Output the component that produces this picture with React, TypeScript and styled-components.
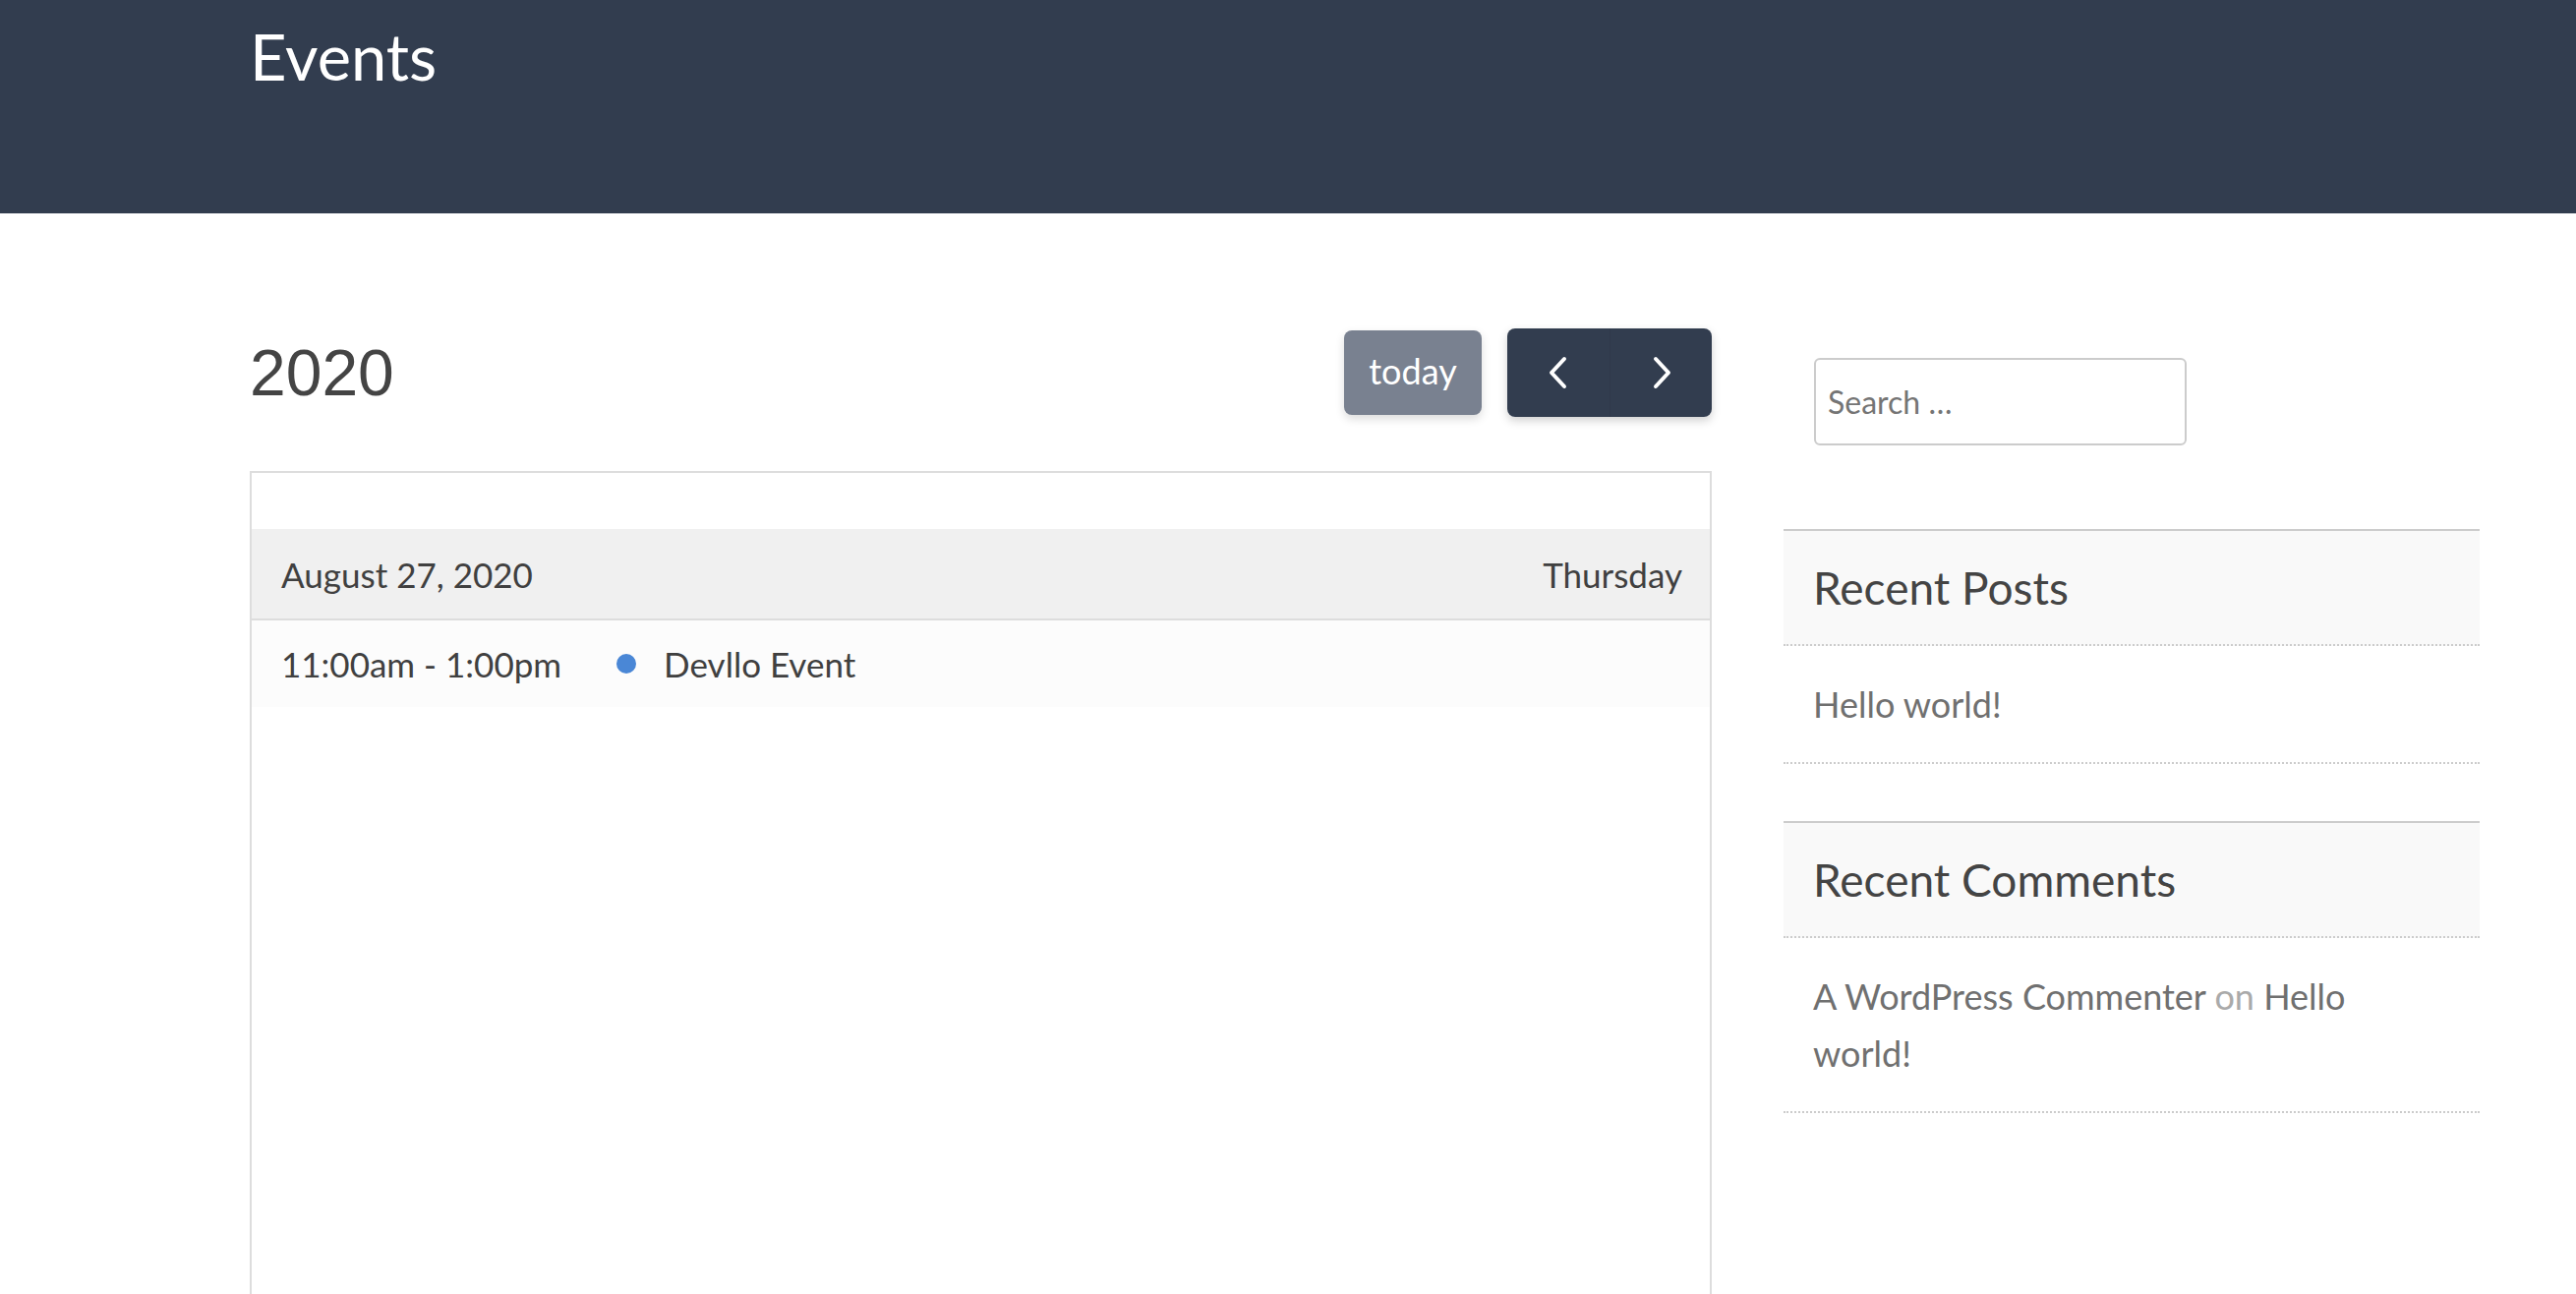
import React from "react";
import styled, { createGlobalStyle } from "styled-components";

const GlobalStyle = createGlobalStyle`
  html, body { margin: 0; padding: 0; background: #ffffff; }
  body { font-family: Lato, "Open Sans", sans-serif; color: #404040; }
  * { box-sizing: border-box; }
`;

const SiteHeader = styled.header`
  background: #323d4f;
  height: 217px;
  padding: 18px 0 0 254px;
`;

const SiteTitle = styled.h1`
  margin: 0;
  font-family: Lato, sans-serif;
  font-weight: 400;
  font-size: 65px;
  line-height: 1.2;
  color: #ffffff;
`;

const Page = styled.div`
  display: flex;
  align-items: flex-start;
  gap: 73px;
  padding: 117px 0 0 254px;
`;

const Main = styled.main`
  width: 1487px;
  flex: none;
`;

const Toolbar = styled.div`
  display: flex;
  align-items: center;
  justify-content: space-between;
  height: 90px;
  margin-bottom: 55px;
`;

const YearTitle = styled.h2`
  margin: 0;
  font-family: "Liberation Sans", Arial, sans-serif;
  font-weight: 400;
  font-size: 66px;
  color: #444444;
  line-height: 1;
`;

const Buttons = styled.div`
  display: flex;
  align-items: center;
  gap: 26px;
`;

const TodayButton = styled.button`
  width: 140px;
  height: 86px;
  border: none;
  border-radius: 8px;
  background: #798190;
  color: #ffffff;
  font-family: Lato, sans-serif;
  font-size: 36px;
  padding: 0 0 4px;
  box-shadow: 0 4px 10px rgba(0, 0, 0, 0.14);
`;

const NavGroup = styled.div`
  display: flex;
  border-radius: 8px;
  overflow: hidden;
  box-shadow: 0 4px 10px rgba(0, 0, 0, 0.18);
`;

const NavButton = styled.button<{ $first?: boolean }>`
  width: 104px;
  height: 90px;
  border: none;
  background: #323d4f;
  display: flex;
  align-items: center;
  justify-content: center;
  padding: 0;
  border-left: ${(p) => (p.$first ? "none" : "1px solid rgba(0,0,0,0.06)")};
`;

const ListBox = styled.div`
  border: 2px solid #dddddd;
  height: 1000px;
  padding-top: 57px;
`;

const DayHeader = styled.div`
  display: flex;
  align-items: center;
  justify-content: space-between;
  height: 93px;
  padding: 0 28px 0 30px;
  background: #f0f0f0;
  border-bottom: 2px solid #dddddd;
  font-size: 35px;
  color: #404040;
`;

const EventRow = styled.div`
  display: flex;
  align-items: center;
  height: 88px;
  background: #fcfcfc;
  font-size: 35px;
  color: #404040;
`;

const EventTime = styled.span`
  padding: 0 28px 0 30px;
`;

const EventDot = styled.span<{ $color: string }>`
  width: 20px;
  height: 20px;
  border-radius: 50%;
  background: ${(p) => p.$color};
  margin: 0 28px 0 28px;
  flex: none;
`;

const Sidebar = styled.aside`
  width: 708px;
  flex: none;
  display: flex;
  flex-direction: column;
  gap: 58px;
`;

const SearchWidget = styled.div`
  padding: 30px 31px 27px;
`;

const SearchInput = styled.input`
  width: 379px;
  height: 89px;
  border: 2px solid #cccccc;
  border-radius: 6px;
  padding: 0 12px;
  font-family: Lato, sans-serif;
  font-size: 32px;
  color: #444;
  outline: none;
  &::placeholder { color: #757575; }
`;

const Widget = styled.section`
  border-top: 2px solid #cccccc;
`;

const WidgetTitle = styled.h2`
  margin: 0;
  background: #f9f9f9;
  padding: 30px 30px;
  font-family: Lato, sans-serif;
  font-weight: 400;
  font-size: 46px;
  line-height: 55px;
  color: #444444;
  border-bottom: 2px dotted #cccccc;
`;

const WidgetList = styled.ul`
  list-style: none;
  margin: 0;
  padding: 0;
`;

const WidgetItem = styled.li`
  padding: 30px 30px;
  font-size: 36px;
  line-height: 58px;
  color: #aaaaaa;
  border-bottom: 2px dotted #cccccc;
`;

const WidgetLink = styled.a`
  color: #707070;
  text-decoration: none;
`;

const Chevron = ({ dir }: { dir: "left" | "right" }) => (
  <svg width="22" height="34" viewBox="0 0 22 34" fill="none">
    <polyline
      points={dir === "left" ? "17,3 4,17 17,31" : "5,3 18,17 5,31"}
      stroke="#ffffff"
      strokeWidth="4"
      strokeLinecap="round"
      strokeLinejoin="round"
    />
  </svg>
);

export default function App() {
  return (
    <>
      <GlobalStyle />
      <SiteHeader>
        <SiteTitle>Events</SiteTitle>
      </SiteHeader>
      <Page>
        <Main>
          <Toolbar>
            <YearTitle>2020</YearTitle>
            <Buttons>
              <TodayButton>today</TodayButton>
              <NavGroup>
                <NavButton $first aria-label="prev">
                  <Chevron dir="left" />
                </NavButton>
                <NavButton aria-label="next">
                  <Chevron dir="right" />
                </NavButton>
              </NavGroup>
            </Buttons>
          </Toolbar>
          <ListBox>
            <DayHeader>
              <span>August 27, 2020</span>
              <span>Thursday</span>
            </DayHeader>
            <EventRow>
              <EventTime>11:00am - 1:00pm</EventTime>
              <EventDot $color="#4a87d6" />
              <span>Devllo Event</span>
            </EventRow>
          </ListBox>
        </Main>
        <Sidebar>
          <SearchWidget>
            <SearchInput placeholder="Search …" />
          </SearchWidget>
          <Widget>
            <WidgetTitle>Recent Posts</WidgetTitle>
            <WidgetList>
              <WidgetItem>
                <WidgetLink href="#">Hello world!</WidgetLink>
              </WidgetItem>
            </WidgetList>
          </Widget>
          <Widget>
            <WidgetTitle>Recent Comments</WidgetTitle>
            <WidgetList>
              <WidgetItem>
                <WidgetLink href="#">A WordPress Commenter</WidgetLink> on{" "}
                <WidgetLink href="#">Hello world!</WidgetLink>
              </WidgetItem>
            </WidgetList>
          </Widget>
        </Sidebar>
      </Page>
    </>
  );
}
